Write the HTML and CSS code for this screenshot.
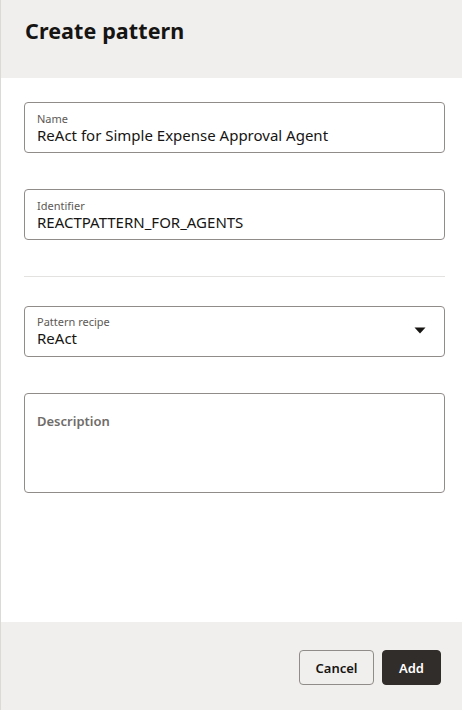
FILE: index.html
```html
<!DOCTYPE html>
<html lang="en">
<head>
<meta charset="utf-8">
<title>Create pattern</title>
<link rel="stylesheet" href="styles.css">
</head>
<body>
<div class="dialog">
  <header class="dialog-header">
    <h1 class="dialog-title">Create pattern</h1>
  </header>
  <main class="dialog-body">
    <div class="field">
      <span class="field-label">Name</span>
      <span class="field-value">ReAct for Simple Expense Approval Agent</span>
    </div>
    <div class="field field-gap">
      <span class="field-label">Identifier</span>
      <span class="field-value">REACTPATTERN_FOR_AGENTS</span>
    </div>
    <hr class="divider">
    <div class="field field-select">
      <div class="field-text">
        <span class="field-label">Pattern recipe</span>
        <span class="field-value">ReAct</span>
      </div>
      <svg class="caret" width="12" height="7" viewBox="0 0 12 7"><path d="M0.5 0.5 L11.5 0.5 L6 6.5 Z" fill="#161513"/></svg>
    </div>
    <div class="field field-textarea">
      <span class="textarea-placeholder">Description</span>
    </div>
  </main>
  <footer class="dialog-footer">
    <button class="btn btn-outline" type="button">Cancel</button>
    <button class="btn btn-primary" type="button">Add</button>
  </footer>
</div>
</body>
</html>
```
FILE: styles.css
```css
* { box-sizing: border-box; }
html, body { margin: 0; padding: 0; height: 100%; }
body {
  font-family: "Noto Sans", "Open Sans", Arial, sans-serif;
  color: #161513;
  background: #ffffff;
}
.dialog {
  height: 710px;
  display: flex;
  flex-direction: column;
  border-left: 1px solid #dcdad7;
}
.dialog-header {
  background: #f1efed;
  height: 78px;
  padding: 15px 24px 0 24px;
  flex: none;
}
.dialog-title {
  margin: 0;
  font-size: 21.5px;
  font-weight: 700;
  line-height: 32px;
  letter-spacing: 0.1px;
}
.dialog-body {
  flex: 1;
  padding: 24px 17px 0 23px;
  display: flex;
  flex-direction: column;
}
.field {
  border: 1px solid #8f8c89;
  border-radius: 4px;
  height: 51px;
  padding: 10px 12px 0 12px;
  display: flex;
  flex-direction: column;
}
.field-gap { margin-top: 36px; }
.field-label {
  font-size: 11px;
  line-height: 12px;
  color: #5c5955;
}
.field-value {
  font-size: 15px;
  line-height: 19px;
  margin-top: 1px;
  color: #161513;
}
.divider {
  border: 0;
  border-top: 1px solid #e4e2e0;
  margin: 36px 0 29px 0;
  height: 0;
}
.field-select {
  flex-direction: row;
  align-items: center;
  justify-content: space-between;
  padding-top: 0;
  padding-right: 18px;
}
.field-text {
  display: flex;
  flex-direction: column;
  padding-top: 0;
}
.caret { display: block; margin-top: -3px; }
.field-textarea {
  margin-top: 36px;
  height: 100px;
  padding-top: 18px;
}
.textarea-placeholder {
  font-size: 13px;
  font-weight: 600;
  color: #6f6c69;
  line-height: 18px;
}
.dialog-footer {
  flex: none;
  height: 88px;
  background: #f1efed;
  display: flex;
  justify-content: flex-end;
  align-items: flex-start;
  gap: 8px;
  padding: 28px 21px 0 0;
}
.btn {
  font-family: inherit;
  height: 35px;
  border-radius: 4px;
  font-size: 13px;
  font-weight: 600;
  padding: 0 12px;
  cursor: pointer;
}
.btn-outline {
  width: 75px;
  background: transparent;
  border: 1px solid #8f8c89;
  color: #161513;
}
.btn-primary {
  width: 59px;
  background: #312d2a;
  border: 1px solid #312d2a;
  color: #ffffff;
}
```
